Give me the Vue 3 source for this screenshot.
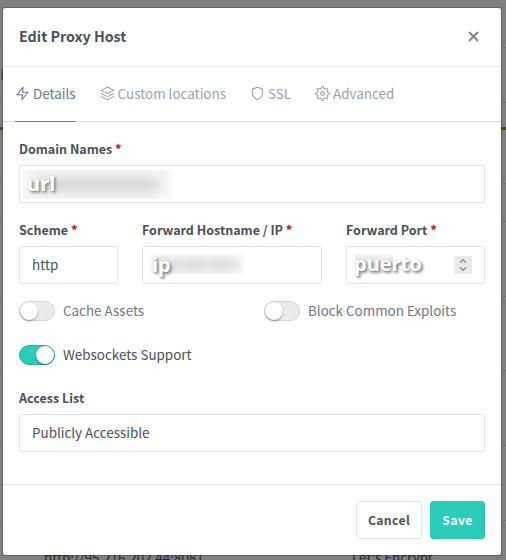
<script setup>
import { ref } from 'vue'

const active = ref('Details')
const tabs = [
  { name: 'Details', paths: ['M13 2 3 14h9l-1 8 10-12h-9z'] },
  { name: 'Custom locations', paths: ['m12 2 10 5-10 5L2 7z', 'm2 17 10 5 10-5', 'm2 12 10 5 10-5'] },
  { name: 'SSL', paths: ['M12 22s8-4 8-10V5l-8-3-8 3v7c0 6 8 10 8 10z'] },
  {
    name: 'Advanced',
    paths: [
      'M15 12a3 3 0 1 1-6 0 3 3 0 0 1 6 0z',
      'M19.4 15a1.65 1.65 0 0 0 .33 1.82l.06.06a2 2 0 1 1-2.83 2.83l-.06-.06a1.65 1.65 0 0 0-2.8 1.17V21a2 2 0 0 1-4 0v-.09a1.65 1.65 0 0 0-2.98-1.08l-.06.06a2 2 0 1 1-2.83-2.83l.06-.06A1.65 1.65 0 0 0 3.09 14H3a2 2 0 0 1 0-4h.09a1.65 1.65 0 0 0 1.08-2.98l-.06-.06a2 2 0 1 1 2.83-2.83l.06.06A1.65 1.65 0 0 0 10 3.09V3a2 2 0 0 1 4 0v.09a1.65 1.65 0 0 0 2.82 1.17l.06-.06a2 2 0 1 1 2.83 2.83l-.06.06A1.65 1.65 0 0 0 20.91 10H21a2 2 0 0 1 0 4h-.09a1.65 1.65 0 0 0-1.51 1z',
    ],
  },
]
const cache = ref(false)
const exploits = ref(false)
const websockets = ref(true)
</script>

<template>
  <div class="page">
    <div class="backdrop">
      <i class="rule r1"></i>
      <i class="rule r2"></i>
      <i class="accent"></i>
      <i class="rule r3"></i>
      <i class="rule r4"></i>
      <i class="rule r5"></i>
      <i class="rule r6"></i>
      <i class="rule r7"></i>
      <i class="rule r8"></i>
      <div class="row-text"><span class="dest">http://95.216.202.44:8081</span><span class="cert">Let's Encrypt</span></div>
    </div>
    <i class="chip"></i>
    <div class="modal">
      <header class="head">
        <h5>Edit Proxy Host</h5>
        <button class="close" aria-label="Close">
          <svg width="11" height="11" viewBox="0 0 11 11"><path d="M1 1l9 9M10 1l-9 9" /></svg>
        </button>
      </header>
      <nav class="tabs">
        <a v-for="t in tabs" :key="t.name" class="tab" :class="{ active: active === t.name }" @click="active = t.name">
          <svg width="15" height="15" viewBox="0 0 24 24"><path v-for="p in t.paths" :key="p" :d="p" /></svg>
          <span>{{ t.name }}</span>
        </a>
      </nav>
      <main class="body">
        <div class="field">
          <label class="lbl">Domain Names <b>*</b></label>
          <div class="input redacted"><span class="smear smear-url"><i></i></span><span class="mask m-url">url</span></div>
        </div>
        <div class="trio">
          <div class="field">
            <label class="lbl">Scheme <b>*</b></label>
            <div class="input"><span>http</span></div>
          </div>
          <div class="field">
            <label class="lbl">Forward Hostname / IP <b>*</b></label>
            <div class="input redacted"><span class="smear smear-ip"><i></i></span><span class="mask m-ip">ip</span></div>
          </div>
          <div class="field">
            <label class="lbl">Forward Port <b>*</b></label>
            <div class="input redacted port">
              <span class="smear smear-port"></span><span class="mask m-port">puerto</span>
              <span class="spin"><svg width="18" height="18" viewBox="0 0 18 18"><path d="M5.8 6.8 9 3.8l3.2 3M5.8 11.2l3.2 3 3.2-3" /></svg></span>
            </div>
          </div>
        </div>
        <div class="toggles">
          <label class="switch" @click="cache = !cache"><i class="track" :class="{ on: cache }"></i><span>Cache Assets</span></label>
          <label class="switch" @click="exploits = !exploits"><i class="track" :class="{ on: exploits }"></i><span>Block Common Exploits</span></label>
          <label class="switch" @click="websockets = !websockets"><i class="track" :class="{ on: websockets }"></i><span>Websockets Support</span></label>
        </div>
        <div class="field">
          <label class="lbl">Access List</label>
          <div class="input"><span>Publicly Accessible</span></div>
        </div>
      </main>
      <footer class="foot">
        <button class="btn cancel"><span>Cancel</span></button>
        <button class="btn save"><span>Save</span></button>
      </footer>
    </div>
  </div>
</template>

<style>
body { background: #808080; overflow: hidden; }
</style>

<style scoped>
* { box-sizing: border-box; }
.page {
  position: relative;
  width: 506px;
  height: 560px;
  overflow: hidden;
  font-family: "Noto Sans CJK SC", "Open Sans", sans-serif;
  font-size: 13.43px;
  line-height: 24px;
  color: #495057;
}
.backdrop { display: flex; flex-direction: column; height: 560px; background: #808080; }
.rule { height: 1px; background: #707173; flex: none; }
.r1 { margin-top: 47px; }
.r2 { margin-top: 54px; }
.accent { height: 3px; margin-top: 24px; background: #2f5d00; flex: none; }
.r3 { margin-top: 53px; }
.r4 { margin-top: 37px; }
.r5 { margin-top: 74px; }
.r6 { margin-top: 73px; }
.r7 { margin-top: 74px; }
.r8 { margin-top: 74px; }
.row-text { display: flex; flex: none; margin-top: 24px; height: 24px; color: #25282c; }
.dest { width: 308px; padding-left: 44px; white-space: nowrap; }
.cert { padding-left: 44px; white-space: nowrap; }
.chip { position: absolute; left: 1px; top: 69px; width: 2px; height: 11px; background: #59616b; }
.modal {
  position: absolute;
  left: 2px;
  top: 7px;
  width: 500px;
  height: 549px;
  display: flex;
  flex-direction: column;
  background: #fff;
  background-clip: padding-box;
  border: 1px solid rgba(0, 0, 0, .25);
  border-radius: 3px;
}
.head { display: flex; align-items: center; justify-content: space-between; height: 59px; padding: 0 22px 2px 16px; border-bottom: 1px solid #e6e7e9; flex: none; }
h5 { margin: 0; font-size: 14.3px; font-weight: 700; line-height: 24px; }
.close { display: flex; padding: 0; border: 0; background: none; }
.close path { fill: none; stroke: #808080; stroke-width: 1.8; }
.tabs { display: flex; height: 55px; padding-left: 12px; gap: 24px; border-bottom: 1px solid #dee0e4; flex: none; }
.tab { display: flex; align-items: center; gap: 3px; height: 55px; padding-bottom: 1px; color: #9aa0ac; white-space: nowrap; border-bottom: 1px solid transparent; }
.tab svg { fill: none; stroke: currentColor; stroke-width: 1.75; stroke-linecap: round; stroke-linejoin: round; flex: none; }
.tab span { margin-top: -1px; }
.tab.active { color: #6e7687; border-color: #467fcf; }
.body { display: flex; flex-direction: column; height: 362px; padding: 16px 16px 0; flex: none; }
.field { display: flex; flex-direction: column; min-width: 0; }
.lbl { height: 21px; line-height: 21px; margin-bottom: 6px; font-size: 12.53px; font-weight: 700; white-space: nowrap; }
.lbl b { color: #cd201f; }
.input { display: flex; align-items: center; height: 38px; padding: 0 12px 2px; border: 1px solid #dfe2e9; border-radius: 3px; white-space: nowrap; }
.trio { display: grid; grid-template-columns: 99px 180px 139px; gap: 24px; margin-top: 16px; }
.redacted { position: relative; padding-bottom: 0; }
.smear { position: absolute; overflow: hidden; background: #f8f8f9; }
.smear i { display: block; }
.smear-url { left: 3px; top: 4px; width: 149px; height: 29px; }
.smear-url i { width: 124px; height: 13px; margin: 8px 0 0 12px; background: #cdd0d3; filter: blur(6px); }
.smear-ip { left: 7px; top: 7px; width: 94px; height: 20px; }
.smear-ip i { width: 82px; height: 12px; margin: 5px 0 0 6px; background: repeating-linear-gradient(90deg, #d8dadc 0 21px, #e1e2e4 21px 27px); filter: blur(4px); }
.smear-port { left: 8px; top: 7px; width: 38px; height: 20px; background: linear-gradient(#f4f5f5, #dcdee0 50%, #fafafa); }
.mask { position: relative; font-family: "Open Sans", sans-serif; font-weight: 700; font-size: 20px; color: #fff; text-shadow: 1px 1px 2px #868a8f, 2px 2px 3px #9b9fa3; }
.m-url { left: -5px; }
.m-ip { left: -3px; }
.m-port { left: -5px; top: -1px; }
.port { justify-content: space-between; }
.spin { display: flex; width: 18px; height: 18px; background: #e9e8ed; }
.spin path { fill: none; stroke: #8e8e98; stroke-width: 1.5; }
.toggles { display: grid; grid-template-columns: 221px 1fr; column-gap: 24px; row-gap: 20px; margin-top: 15px; }
.switch { display: flex; align-items: center; gap: 8px; height: 24px; color: #6e7687; white-space: nowrap; }
.switch span { margin-top: -2px; }
.track { display: flex; align-items: center; width: 36px; height: 20px; border: 1px solid #cdd3df; border-radius: 10px; background: #e9ecef; }
.track::after { content: ""; width: 18px; height: 18px; border-radius: 50%; background: #fff; box-shadow: 0 1px 2px rgba(0, 0, 0, .4); }
.track.on { justify-content: flex-end; background: #2bcbba; border-color: #22b3a4; }
.track.on + span { color: #495057; }
.toggles + .field { margin-top: 20px; }
.foot { display: flex; align-items: center; justify-content: flex-end; gap: 8px; flex: 1; padding: 0 16px; border-top: 1px solid #e3e6ea; }
.btn { display: flex; align-items: center; justify-content: center; height: 38px; padding: 0; border: 1px solid #dfe2e9; border-radius: 3px; background: #fff; font: 700 12.2px/24px "Noto Sans CJK SC", "Open Sans", sans-serif; letter-spacing: .03em; color: #495057; }
.cancel { width: 66px; }
.save { width: 55px; background: #2bcbba; border-color: #2bcbba; color: #fff; }
</style>
